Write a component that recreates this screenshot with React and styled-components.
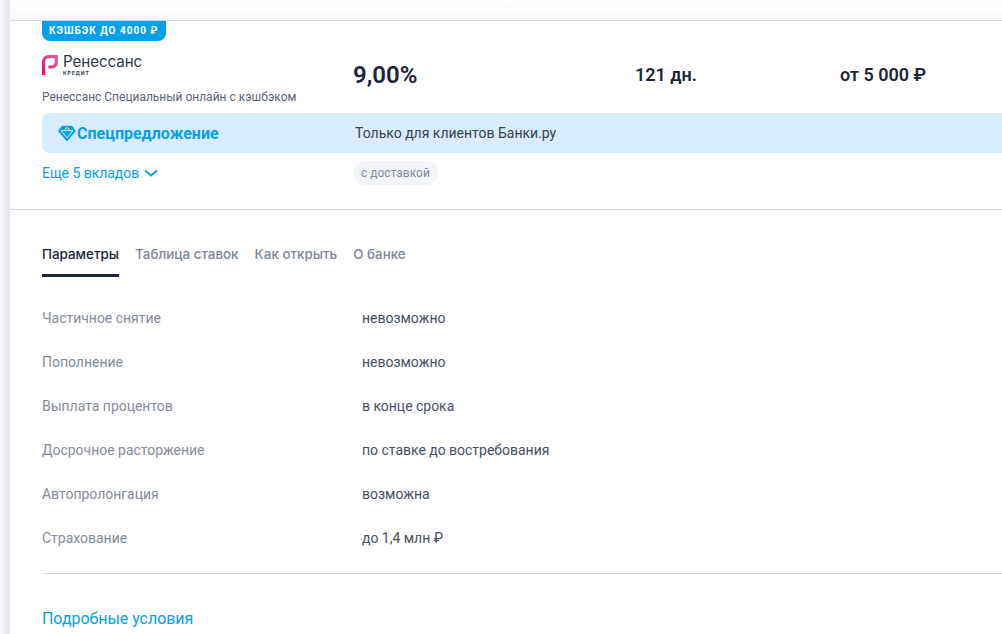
import React from 'react';
import styled, { createGlobalStyle } from 'styled-components';

const GlobalStyle = createGlobalStyle`
  html, body {
    margin: 0;
    padding: 0;
    height: 100%;
    overflow: hidden;
    background: #fff;
    font-family: Roboto, "Liberation Sans", sans-serif;
  }
`;

const Page = styled.div`
  width: 1002px;
  height: 634px;
  overflow: hidden;
  display: flex;
  background: #fff;
`;

const LeftShade = styled.div`
  flex: none;
  width: 10px;
  background: linear-gradient(to right, #f7f7fa, #e4e4ec);
`;

const Main = styled.div`
  flex: 1;
  min-width: 0;
`;

const TopStrip = styled.div`
  height: 20px;
  border-bottom: 1px solid #d3d3e2;
  background: linear-gradient(to bottom, #ffffff, #f8f7fb);
`;

const Offer = styled.section`
  height: 188px;
  padding-left: 32px;
  border-bottom: 1px solid #d9d9e3;
`;

const Badge = styled.div`
  display: inline-block;
  height: 20px;
  line-height: 20px;
  padding: 0 8px 0 7px;
  background: #05a1e8;
  border-radius: 0 0 8px 8px;
  color: #fff;
  font-size: 10px;
  font-weight: 700;
  letter-spacing: 1px;
  vertical-align: top;
`;

const SummaryRow = styled.div`
  display: grid;
  grid-template-columns: 311px 282px 205px 1fr;
  height: 72px;
`;

const Product = styled.div`
  padding-top: 14px;
`;

const Logo = styled.div`
  display: flex;
  align-items: flex-start;
  gap: 5px;
  height: 22px;
`;

const LogoWords = styled.div`
  display: flex;
  flex-direction: column;
`;

const LogoName = styled.span`
  font-family: Inter, sans-serif;
  font-size: 15.2px;
  line-height: 14px;
  color: #2e3a47;
  letter-spacing: -0.1px;
`;

const LogoSub = styled.span`
  font-family: Inter, sans-serif;
  font-size: 5px;
  font-weight: 700;
  line-height: 9px;
  letter-spacing: 0.9px;
  color: #2e3a47;
`;

const ProductName = styled.div`
  margin-top: 12px;
  font-size: 12px;
  line-height: 16px;
  letter-spacing: -0.01px;
  color: #5a6474;
`;

const Value = styled.div`
  padding-top: 22px;
  color: #1b2638;
  font-weight: 600;
  font-size: ${p => (p.$big ? '24px' : '18px')};
  line-height: 24px;
`;

const SpecialBar = styled.div`
  display: grid;
  grid-template-columns: 297px 1fr;
  align-items: center;
  height: 40px;
  padding-left: 16px;
  background: #d9ecfe;
  border-radius: 8px 0 0 8px;
  box-sizing: border-box;
`;

const SpecialTitle = styled.div`
  display: flex;
  align-items: center;
  gap: 1px;
  color: #05a1e8;
  font-size: 16px;
  font-weight: 700;
`;

const SpecialText = styled.div`
  padding-bottom: 1px;
  color: #36414f;
  font-size: 14px;
`;

const FooterRow = styled.div`
  display: grid;
  grid-template-columns: 311px 1fr;
  align-items: center;
  margin-top: 8px;
`;

const MoreLink = styled.a`
  display: flex;
  align-items: center;
  gap: 5px;
  color: #05a1e8;
  font-size: 14px;
  line-height: 24px;
  letter-spacing: -0.03px;
`;

const Tag = styled.span`
  display: inline-block;
  height: 24px;
  line-height: 24px;
  padding: 0 8px;
  border-radius: 12px;
  background: #f3f4f8;
  color: #858b99;
  font-size: 12px;
`;

const Details = styled.section`
  padding: 32px 0 0 32px;
`;

const Tabs = styled.nav`
  display: flex;
  gap: 16px;
`;

const Tab = styled.a`
  display: block;
  height: 35px;
  line-height: 25px;
  box-sizing: border-box;
  font-family: Inter, sans-serif;
  font-size: 13.4px;
  font-weight: 500;
  color: ${p => (p.$active ? '#1b2638' : '#7d8596')};
  border-bottom: 3px solid ${p => (p.$active ? '#1b2638' : 'transparent')};
`;

const ParamList = styled.dl`
  margin: 19px 0 0;
`;

const ParamRow = styled.div`
  display: grid;
  grid-template-columns: 320px 1fr;
  height: 44px;
  align-items: center;
`;

const ParamName = styled.dt`
  font-size: 14px;
  letter-spacing: -0.02px;
  color: #858b99;
`;

const ParamValue = styled.dd`
  margin: 0;
  font-size: 14px;
  letter-spacing: -0.02px;
  color: #465061;
`;

const Divider = styled.hr`
  margin: 13px 0 0;
  border: 0;
  border-top: 1px solid #d9d9e3;
`;

const DetailsLink = styled.a`
  display: block;
  margin-top: 34px;
  color: #05a1e8;
  font-size: 16px;
  line-height: 21px;
  letter-spacing: -0.04px;
`;

const params = [
  ['Частичное снятие', 'невозможно'],
  ['Пополнение', 'невозможно'],
  ['Выплата процентов', 'в конце срока'],
  ['Досрочное расторжение', 'по ставке до востребования'],
  ['Автопролонгация', 'возможна'],
  ['Страхование', 'до 1,4 млн ₽'],
];

const tabs = ['Параметры', 'Таблица ставок', 'Как открыть', 'О банке'];

const LogoMark = () => (
  <svg width="16" height="20" viewBox="0 0 16 20" fill="none">
    <defs>
      <linearGradient id="rc" x1="0" y1="1" x2="1" y2="0">
        <stop offset="0" stopColor="#e0106c" />
        <stop offset="1" stopColor="#f05b97" />
      </linearGradient>
    </defs>
    <path
      d="M1.6 20V6.6a5 5 0 0 1 5-5h7.8V7a5 5 0 0 1-5 5H6.4"
      stroke="url(#rc)"
      strokeWidth="3.2"
    />
  </svg>
);

const Diamond = () => (
  <svg width="18" height="17" viewBox="0 0 18 17" fill="none">
    <path d="M4 .8h10L18 6 9 16.6 0 6z" fill="#05a1e8" />
    <path
      d="M3 5.6h12l-6 7.4zM6.4 5.6l1.4-2.6h2.4l1.4 2.6"
      stroke="#d9ecfe"
      strokeWidth="1"
      strokeLinejoin="round"
    />
  </svg>
);

const Chevron = () => (
  <svg width="14" height="8" viewBox="0 0 14 8" fill="none">
    <path d="M1 1.5L7 6.5l6-5" stroke="#05a1e8" strokeWidth="2" />
  </svg>
);

export default function App() {
  return (
    <Page>
      <GlobalStyle />
      <LeftShade />
      <Main>
        <TopStrip />
        <Offer>
          <Badge>КЭШБЭК ДО 4000 ₽</Badge>
          <SummaryRow>
            <Product>
              <Logo>
                <LogoMark />
                <LogoWords>
                  <LogoName>Ренессанс</LogoName>
                  <LogoSub>КРЕДИТ</LogoSub>
                </LogoWords>
              </Logo>
              <ProductName>Ренессанс Специальный онлайн с кэшбэком</ProductName>
            </Product>
            <Value $big>9,00%</Value>
            <Value>121 дн.</Value>
            <Value>от 5 000 ₽</Value>
          </SummaryRow>
          <SpecialBar>
            <SpecialTitle>
              <Diamond />
              Спецпредложение
            </SpecialTitle>
            <SpecialText>Только для клиентов Банки.ру</SpecialText>
          </SpecialBar>
          <FooterRow>
            <MoreLink>
              Еще 5 вкладов
              <Chevron />
            </MoreLink>
            <div>
              <Tag>с доставкой</Tag>
            </div>
          </FooterRow>
        </Offer>
        <Details>
          <Tabs>
            {tabs.map((t, i) => (
              <Tab key={t} $active={i === 0}>
                {t}
              </Tab>
            ))}
          </Tabs>
          <ParamList>
            {params.map(([name, value]) => (
              <ParamRow key={name}>
                <ParamName>{name}</ParamName>
                <ParamValue>{value}</ParamValue>
              </ParamRow>
            ))}
          </ParamList>
          <Divider />
          <DetailsLink>Подробные условия</DetailsLink>
        </Details>
      </Main>
    </Page>
  );
}
